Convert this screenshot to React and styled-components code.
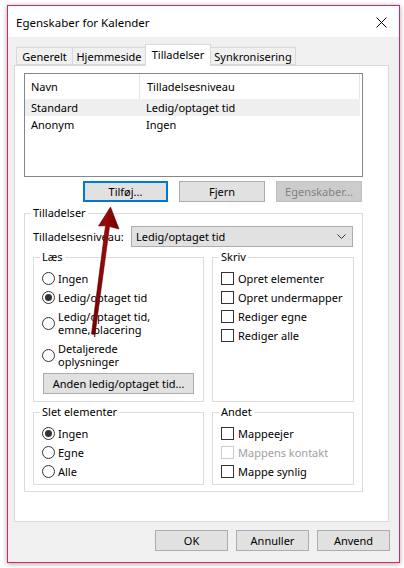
import React from "react";
import styled, { createGlobalStyle } from "styled-components";

const Global = createGlobalStyle`
  html, body { margin: 0; padding: 0; background: #ffffff; }
  body {
    font-family: "Noto Sans", "Open Sans", "Liberation Sans", sans-serif;
    font-size: 11px;
    color: #000;
  }
  * { box-sizing: border-box; }
`;

const Stage = styled.div`
  position: relative;
  width: 404px;
  height: 568px;
  padding: 5px 0 0 7px;
`;

const Window = styled.div`
  width: 393px;
  height: 558px;
  border: 1px solid #e0206b;
  box-shadow: 0 1px 5px rgba(0, 0, 0, 0.35);
  display: flex;
  flex-direction: column;
  background: #f0f0f0;
`;

const TitleBar = styled.div`
  height: 31px;
  background: #ffffff;
  display: flex;
  align-items: center;
  justify-content: space-between;
  padding: 1px 12px 0 8px;
  font-size: 11.5px;
`;

const Body = styled.div`
  flex: 1;
  display: flex;
  flex-direction: column;
  padding: 7px 10px 11px 6px;
`;

const TabRow = styled.div`
  display: flex;
  align-items: flex-end;
  height: 21px;
  padding-left: 2px;
  position: relative;
  z-index: 1;
`;

const Tab = styled.div`
  width: ${(p) => p.$w}px;
  height: ${(p) => (p.$active ? 22 : 18)}px;
  margin-bottom: ${(p) => (p.$active ? -1 : 0)}px;
  margin-left: ${(p) => (p.$first ? 0 : -1)}px;
  border: 1px solid #d9d9d9;
  border-bottom: ${(p) => (p.$active ? "none" : "1px solid #d9d9d9")};
  background: ${(p) => (p.$active ? "#ffffff" : "#f0f0f0")};
  display: flex;
  align-items: center;
  justify-content: center;
  padding-bottom: ${(p) => (p.$active ? 3 : 0)}px;
  white-space: nowrap;
`;

const Panel = styled.div`
  flex: 1;
  border: 1px solid #d9d9d9;
  background: #ffffff;
  padding: 7px 25px 0 9px;
`;

const List = styled.div`
  width: 339px;
  height: 104px;
  border: 1px solid #828790;
  background: #fff;
`;

const ListRow = styled.div`
  display: grid;
  grid-template-columns: 114px 1fr;
  height: ${(p) => (p.$header ? 25 : 17)}px;
  align-items: center;
  background: ${(p) => (p.$selected ? "#efefef" : "#ffffff")};
  margin-right: 2px;
`;

const Cell = styled.div`
  height: 100%;
  display: flex;
  align-items: center;
  padding-left: ${(p) => (p.$second ? 7 : 6)}px;
  border-left: ${(p) => (p.$divider ? "1px solid #e5e5e5" : "none")};
  border-right: ${(p) => (p.$endDivider ? "1px solid #e5e5e5" : "none")};
  white-space: nowrap;
`;

const ButtonRow = styled.div`
  width: 338px;
  display: flex;
  justify-content: flex-end;
  gap: 11px;
  margin-top: 4px;
`;

const Button = styled.div`
  width: ${(p) => p.$w}px;
  height: 21px;
  display: flex;
  align-items: center;
  justify-content: center;
  background: ${(p) => (p.$disabled ? "#cccccc" : "#e1e1e1")};
  border: ${(p) =>
    p.$default ? "2px solid #0078d7" : p.$disabled ? "1px solid #bfbfbf" : "1px solid #adadad"};
  color: ${(p) => (p.$disabled ? "#838383" : "#000")};
  margin-left: ${(p) => p.$ml || 0}px;
  margin-top: ${(p) => p.$mt || 0}px;
  white-space: nowrap;
`;

const Group = styled.fieldset`
  margin: ${(p) => p.$mt || 0}px 0 0 0;
  padding: ${(p) => p.$pad};
  border: 1px solid #dcdcdc;
  min-width: 0;
  width: ${(p) => (p.$w ? p.$w + "px" : "auto")};
`;

const Legend = styled.legend`
  padding: 0 2px;
  margin-left: -2px;
  line-height: 16px;
`;

const LevelRow = styled.div`
  display: flex;
  align-items: center;
  height: 21px;
`;

const LevelLabel = styled.div`
  width: 98px;
  white-space: nowrap;
`;

const Dropdown = styled.div`
  width: 222px;
  height: 21px;
  background: #e1e1e1;
  border: 1px solid #adadad;
  display: flex;
  align-items: center;
  justify-content: space-between;
  padding: 0 6px 0 4px;
`;

const GroupsGrid = styled.div`
  display: grid;
  grid-template-columns: 171px 142px;
  column-gap: 8px;
  row-gap: 2px;
  margin-top: 2px;
`;

const Option = styled.div`
  display: flex;
  align-items: center;
  min-height: 19px;
  padding: 3px 0;
  line-height: 13px;
  color: ${(p) => (p.$disabled ? "#a0a0a0" : "#000")};
  white-space: nowrap;
`;

const Radio = styled.span`
  width: 13px;
  height: 13px;
  border-radius: 50%;
  border: 1px solid #333333;
  background: #fff;
  margin-right: 3px;
  flex: none;
  display: flex;
  align-items: center;
  justify-content: center;
  &::after {
    content: "";
    width: 7px;
    height: 7px;
    border-radius: 50%;
    background: ${(p) => (p.$checked ? "#333333" : "transparent")};
  }
`;

const Check = styled.span`
  width: 13px;
  height: 13px;
  border: 1px solid ${(p) => (p.$disabled ? "#cccccc" : "#333333")};
  background: #fff;
  margin-right: 4px;
  flex: none;
`;

const Footer = styled.div`
  display: flex;
  justify-content: flex-end;
  gap: 8px;
  margin-top: 8px;
  margin-right: -1px;
`;

const ArrowLayer = styled.svg`
  position: absolute;
  left: 0;
  top: 0;
  pointer-events: none;
`;

const CloseIcon = () => (
  <svg width="11" height="11" viewBox="0 0 11 11">
    <path d="M0.5 0.5 L10.5 10.5 M10.5 0.5 L0.5 10.5" stroke="#000" strokeWidth="1" />
  </svg>
);

const Chevron = () => (
  <svg width="9" height="5" viewBox="0 0 9 5">
    <path d="M0.5 0.5 L4.5 4.5 L8.5 0.5" fill="none" stroke="#333" strokeWidth="1" />
  </svg>
);

export default function App() {
  return (
    <Stage>
      <Global />
      <Window>
        <TitleBar>
          <span>Egenskaber for Kalender</span>
          <CloseIcon />
        </TitleBar>
        <Body>
          <TabRow>
            <Tab $w={57} $first>Generelt</Tab>
            <Tab $w={74}>Hjemmeside</Tab>
            <Tab $w={66} $active>Tilladelser</Tab>
            <Tab $w={86}>Synkronisering</Tab>
          </TabRow>
          <Panel>
            <List>
              <ListRow $header>
                <Cell>Navn</Cell>
                <Cell $divider $second $endDivider>Tilladelsesniveau</Cell>
              </ListRow>
              <ListRow $selected>
                <Cell>Standard</Cell>
                <Cell $second>Ledig/optaget tid</Cell>
              </ListRow>
              <ListRow>
                <Cell>Anonym</Cell>
                <Cell $second>Ingen</Cell>
              </ListRow>
            </List>
            <ButtonRow>
              <Button $w={85} $default>Tilføj...</Button>
              <Button $w={86}>Fjern</Button>
              <Button $w={86} $disabled>Egenskaber...</Button>
            </ButtonRow>
            <Group $w={339} $mt={3} $pad="5px 7px 6px 8px">
              <Legend>Tilladelser</Legend>
              <LevelRow>
                <LevelLabel>Tilladelsesniveau:</LevelLabel>
                <Dropdown>
                  <span>Ledig/optaget tid</span>
                  <Chevron />
                </Dropdown>
              </LevelRow>
              <GroupsGrid>
                <Group $pad="4px 8px 7px 8px">
                  <Legend>Læs</Legend>
                  <Option><Radio />Ingen</Option>
                  <Option><Radio $checked />Ledig/optaget tid</Option>
                  <Option><Radio /><span>Ledig/optaget tid,<br />emne, placering</span></Option>
                  <Option><Radio /><span>Detaljerede<br />oplysninger</span></Option>
                  <Button $w={151} $ml={1} $mt={2}>Anden ledig/optaget tid...</Button>
                </Group>
                <Group $pad="4px 8px 7px 8px">
                  <Legend>Skriv</Legend>
                  <Option><Check />Opret elementer</Option>
                  <Option><Check />Opret undermapper</Option>
                  <Option><Check />Rediger egne</Option>
                  <Option><Check />Rediger alle</Option>
                </Group>
                <Group $pad="4px 8px 3px 8px">
                  <Legend>Slet elementer</Legend>
                  <Option><Radio $checked />Ingen</Option>
                  <Option><Radio />Egne</Option>
                  <Option><Radio />Alle</Option>
                </Group>
                <Group $pad="4px 8px 3px 8px">
                  <Legend>Andet</Legend>
                  <Option><Check />Mappeejer</Option>
                  <Option $disabled><Check $disabled />Mappens kontakt</Option>
                  <Option><Check />Mappe synlig</Option>
                </Group>
              </GroupsGrid>
            </Group>
          </Panel>
          <Footer>
            <Button $w={73}>OK</Button>
            <Button $w={73}>Annuller</Button>
            <Button $w={73}>Anvend</Button>
          </Footer>
        </Body>
      </Window>
      <ArrowLayer width="404" height="568" viewBox="0 0 404 568">
        <defs>
          <linearGradient id="arrowGrad" x1="0" y1="0" x2="1" y2="0">
            <stop offset="0" stopColor="#6e0000" />
            <stop offset="0.5" stopColor="#9a0a0a" />
            <stop offset="1" stopColor="#6e0000" />
          </linearGradient>
        </defs>
        <path
          d="M110.5 207 L119 229 L109.5 226.5 L95 334.5 L91.5 334 L105.5 225.8 L98.5 226 Z"
          fill="url(#arrowGrad)"
          stroke="#5a0000"
          strokeWidth="0.6"
          strokeLinejoin="round"
        />
      </ArrowLayer>
    </Stage>
  );
}
